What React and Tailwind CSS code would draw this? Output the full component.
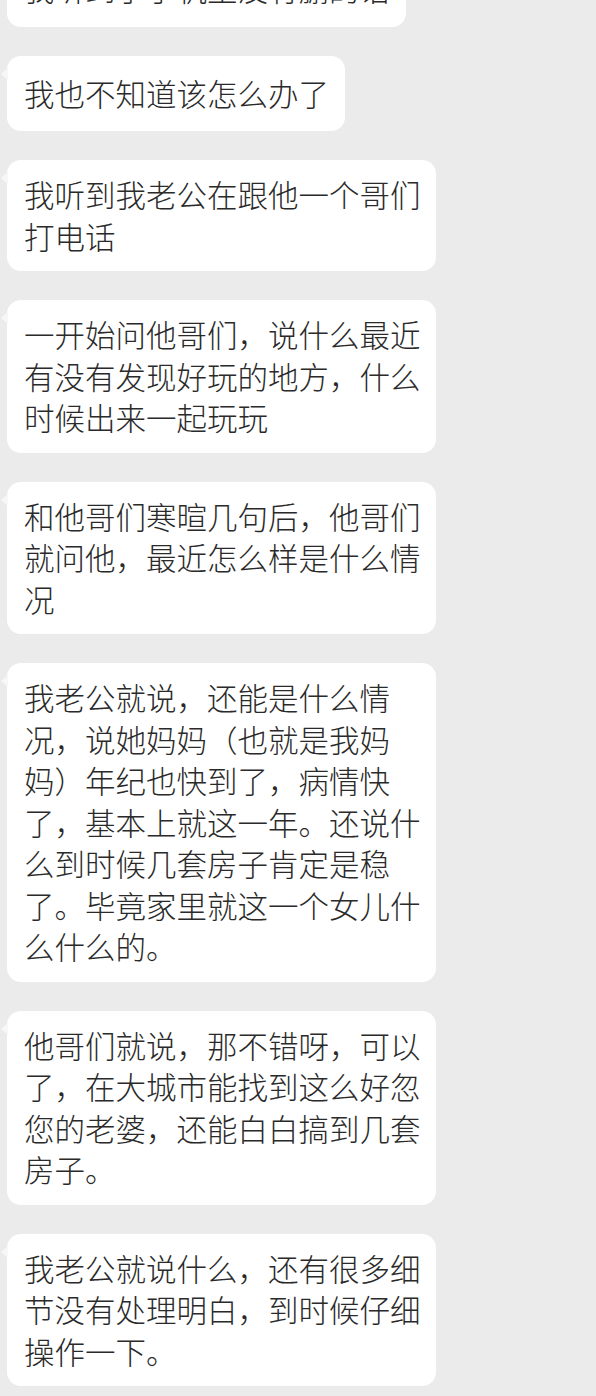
import React from "react";

const bubbles = [
  { lines: ["我听到了手机里没有删的话"], single: true, top: true },
  { lines: ["我也不知道该怎么办了"], single: true },
  { lines: ["我听到我老公在跟他一个哥们", "打电话"] },
  { lines: ["一开始问他哥们，说什么最近", "有没有发现好玩的地方，什么", "时候出来一起玩玩"] },
  { lines: ["和他哥们寒暄几句后，他哥们", "就问他，最近怎么样是什么情", "况"] },
  {
    lines: [
      "我老公就说，还能是什么情",
      "况，说她妈妈（也就是我妈",
      "妈）年纪也快到了，病情快",
      "了，基本上就这一年。还说什",
      "么到时候几套房子肯定是稳",
      "了。毕竟家里就这一个女儿什",
      "么什么的。",
    ],
  },
  { lines: ["他哥们就说，那不错呀，可以", "了，在大城市能找到这么好忽", "您的老婆，还能白白搞到几套", "房子。"] },
  { lines: ["我老公就说什么，还有很多细", "节没有处理明白，到时候仔细", "操作一下。"] },
];

function Bubble({ lines, single, top }) {
  return (
    <div
      className={
        "relative bg-white rounded-[14px] pl-[17px] pr-[16px] text-[#2a2a2a] text-[30.5px] leading-[41.5px] font-light " +
        (single ? "w-fit py-[17px] " : "w-[429px] py-[14px] ") +
        (top ? "mt-[-49px]" : "")
      }
    >
      <div className="absolute left-[-6px] top-[12px] w-0 h-0 border-t-[6px] border-b-[6px] border-r-[7px] border-t-transparent border-b-transparent border-r-[#f7f7f7]" />
      {lines.map((l, i) => (
        <div key={i} className="whitespace-nowrap">
          {l}
        </div>
      ))}
    </div>
  );
}

export default function App() {
  return (
    <div
      className="w-[596px] h-[1396px] overflow-hidden bg-[#ebebeb]"
      style={{ fontFamily: '"Noto Sans CJK SC", "Noto Sans", sans-serif' }}
    >
      <div className="flex flex-col gap-[29px] pl-[7px]">
        {bubbles.map((b, i) => (
          <Bubble key={i} {...b} />
        ))}
      </div>
    </div>
  );
}
